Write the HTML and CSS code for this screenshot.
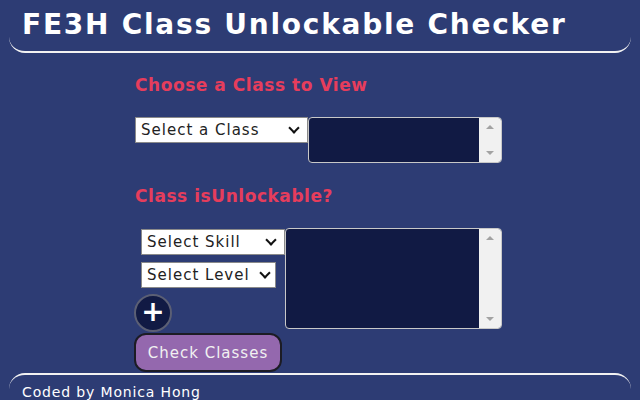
FILE: index.html
```html
<!DOCTYPE html>
<html>
<head>
<meta charset="utf-8">
<link rel="stylesheet" href="styles.css">
</head>
<body>
<header class="site-header">
  <h1 class="title">FE3H Class Unlockable Checker</h1>
</header>
<main class="content">
  <section class="panel">
    <h2 class="heading">Choose a Class to View</h2>
    <div class="row">
      <span class="select-wrap wrap-class">
        <select class="picker"><option>Select a Class</option></select>
      </span>
      <div class="output output-small">
        <textarea class="output-text"></textarea>
        <div class="scrollbar"><span class="arrow-up"></span><span class="arrow-down"></span></div>
      </div>
    </div>
  </section>
  <section class="panel">
    <h2 class="heading heading-second">Class isUnlockable?</h2>
    <div class="row">
      <div class="controls">
        <span class="select-wrap wrap-skill">
          <select class="picker"><option>Select Skill</option></select>
        </span>
        <span class="select-wrap wrap-level">
          <select class="picker"><option>Select Level</option></select>
        </span>
        <button class="add-btn" type="button">+</button>
        <button class="check-btn" type="button">Check Classes</button>
      </div>
      <div class="output output-large">
        <textarea class="output-text"></textarea>
        <div class="scrollbar"><span class="arrow-up"></span><span class="arrow-down"></span></div>
      </div>
    </div>
  </section>
</main>
<footer class="site-footer">
  <p class="credit">Coded by Monica Hong</p>
</footer>
</body>
</html>
```
FILE: styles.css
```css
html, body {
  margin: 0;
  padding: 0;
  background: #2d3c74;
  font-family: "DejaVu Sans", Verdana, sans-serif;
  overflow: hidden;
}
.site-header {
  margin: 0 9px;
  height: 51px;
  border-bottom: 2px solid #f2f2f2;
  border-radius: 0 0 16px 16px;
  padding: 0 13px;
}
.title {
  margin: 0;
  padding-top: 7px;
  font-size: 28px;
  font-weight: bold;
  letter-spacing: 1.75px;
  color: #fff;
  line-height: 36px;
}
.content {
  padding-left: 135px;
}
.heading {
  margin: 0;
  color: #e63d5c;
  font-size: 17px;
  font-weight: bold;
  letter-spacing: 0.55px;
  line-height: 20px;
}
.panel:first-child .heading {
  padding-top: 22px;
}
.heading-second {
  padding-top: 23px;
}
.row {
  display: flex;
  align-items: flex-start;
  margin-top: 22px;
}
.select-wrap {
  position: relative;
  display: block;
}
.select-wrap::after {
  content: "";
  position: absolute;
  right: 10px;
  top: 7px;
  width: 6px;
  height: 6px;
  border-right: 2.5px solid #111;
  border-bottom: 2.5px solid #111;
  transform: rotate(45deg);
  pointer-events: none;
}
.picker {
  display: block;
  appearance: none;
  -webkit-appearance: none;
  font-family: "DejaVu Sans", Verdana, sans-serif;
  font-size: 15px;
  letter-spacing: 1px;
  color: #222;
  background: #fff;
  border: 1px solid #8a8a8a;
  border-radius: 0;
  height: 26px;
  padding: 0 0 0 5px;
  margin: 0;
  width: 100%;
}
.wrap-class {
  width: 173px;
}
.output {
  display: flex;
  background: #111a44;
  border: 1px solid #c8c8c8;
  border-radius: 4px;
  overflow: hidden;
  box-sizing: border-box;
}
.output-text {
  flex: 1;
  background: transparent;
  border: 0;
  resize: none;
  margin: 0;
  padding: 0;
  outline: none;
}
.scrollbar {
  width: 22px;
  background: #f1f1f1;
  position: relative;
}
.arrow-up, .arrow-down {
  position: absolute;
  left: 7px;
  width: 0;
  height: 0;
  border-left: 4px solid transparent;
  border-right: 4px solid transparent;
}
.arrow-up {
  top: 7px;
  border-bottom: 4px solid #a3a3a3;
}
.arrow-down {
  bottom: 7px;
  border-top: 4px solid #a3a3a3;
}
.output-small {
  width: 194px;
  height: 46px;
}
.output-large {
  width: 217px;
  height: 101px;
}
.controls {
  display: flex;
  flex-direction: column;
  align-items: flex-start;
  width: 150px;
}
.wrap-skill {
  width: 144px;
  margin: 1px 0 0 6px;
}
.wrap-level {
  width: 135px;
  margin: 7px 0 0 6px;
}
.wrap-level::after {
  right: 7px;
}
.add-btn {
  margin: 6px 0 0 -1px;
  width: 38px;
  height: 38px;
  border-radius: 50%;
  background: #111a44;
  border: 2px solid #5b5f74;
  color: #fff;
  font-family: "DejaVu Sans", Verdana, sans-serif;
  font-size: 28px;
  font-weight: bold;
  line-height: 1;
  padding: 0 0 3px;
}
.check-btn {
  margin: 1px 0 0 -1px;
  width: 148px;
  height: 39px;
  background: #9468ae;
  border: 2px solid #1c1c24;
  border-radius: 12px;
  color: #f1f1f1;
  font-family: "DejaVu Sans", Verdana, sans-serif;
  font-size: 15px;
  letter-spacing: 1px;
  padding: 0;
}
.site-footer {
  margin: 1px 9px 0;
  border-top: 2px solid #f2f2f2;
  border-radius: 16px 16px 0 0;
  padding: 8px 13px 0;
}
.credit {
  margin: 0;
  color: #fff;
  font-size: 14px;
  letter-spacing: 0.85px;
  line-height: 18px;
}
```
